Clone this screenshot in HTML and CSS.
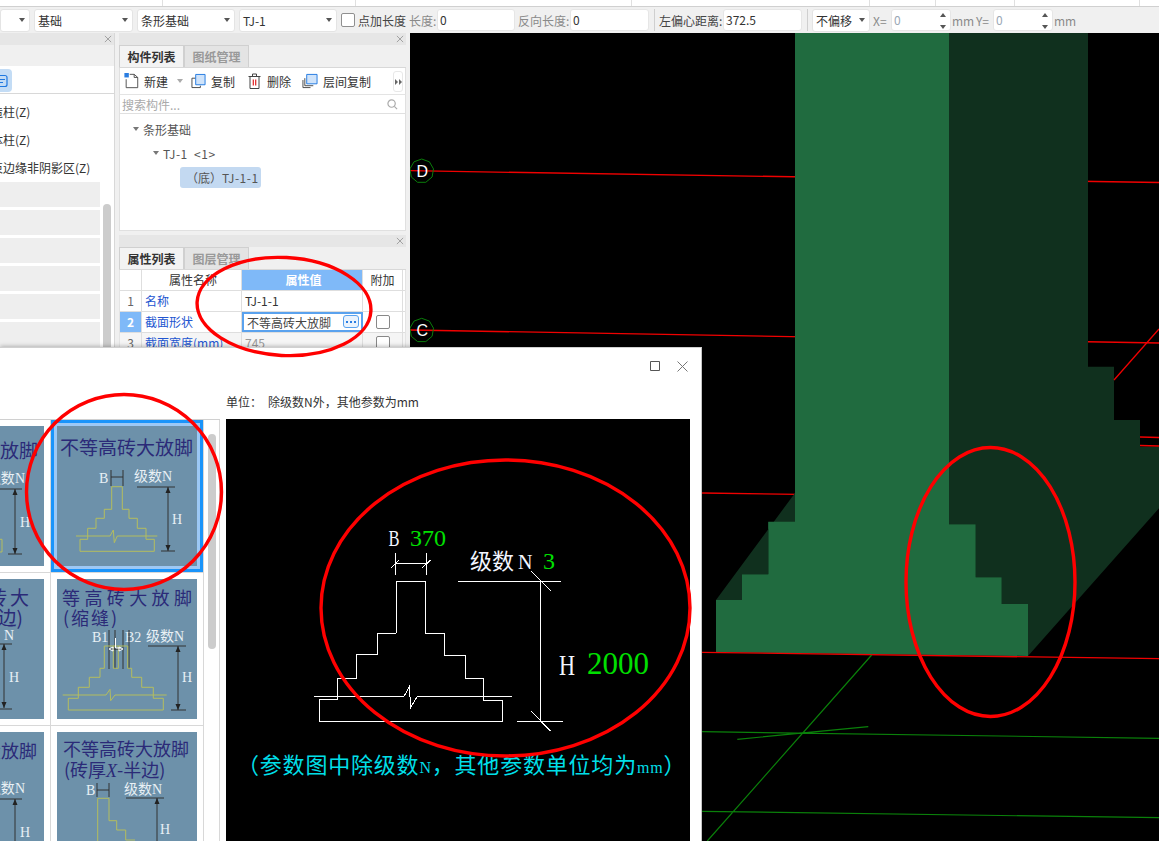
FILE: index.html
```html
<!DOCTYPE html>
<html lang="zh-CN">
<head>
<meta charset="utf-8">
<title>条形基础</title>
<link rel="stylesheet" href="styles.css">
</head>
<body>
<div class="page">
  <div class="strip"><span class="s1"></span><span class="s2"></span><span class="s3"></span><span class="s4"></span><span class="s5"></span><span class="s6"></span><span class="s7"></span></div>
  <div class="toolbar">
    <div class="sel w30"><i class="caret"></i></div>
    <div class="sel w99 ml4"><span>基础</span><i class="caret"></i></div>
    <div class="sel w98 ml4"><span>条形基础</span><i class="caret"></i></div>
    <div class="sel w98 ml4"><span>TJ-1</span><i class="caret"></i></div>
    <div class="check ml4"></div>
    <span class="lbl dark ml3 w48">点加长度</span>
    <span class="lbl ml3 w28">长度:</span>
    <div class="inp w78">0</div>
    <span class="lbl ml3 w52">反向长度:</span>
    <div class="inp w79">0</div>
    <i class="sep"></i>
    <span class="lbl dark w64">左偏心距离:</span>
    <div class="inp w79">372.5</div>
    <i class="sep"></i>
    <div class="sel w58"><span>不偏移</span><i class="caret"></i></div>
    <span class="lbl ml3 w18">X=</span>
    <div class="inp spin w60 grey">0<b class="arrows"><i class="up"></i><i class="down"></i></b></div>
    <span class="lbl ml1 w24">mm</span>
    <span class="lbl w17">Y=</span>
    <div class="inp spin w60 grey">0<b class="arrows"><i class="up"></i><i class="down"></i></b></div>
    <span class="lbl ml1">mm</span>
  </div>

  <div class="work">
    <section class="left">
      <div class="phead"><svg class="px" viewBox="0 0 9 9"><path d="M1 1l7 7M8 1l-7 7"/></svg></div>
      <div class="ltabs"></div>
      <div class="ltool"><div class="lbtn"><svg viewBox="0 0 8 14" class="lbtn-i"><path d="M-2 1.500h7a2 2 0 0 1 2 2v7a2 2 0 0 1-2 2h-7M0 5.500h5M0 8.500h3"/></svg></div></div>
      <div class="llist">
        <div class="litem">构造柱(Z)</div>
        <div class="litem">砌体柱(Z)</div>
        <div class="litem">约束边缘非阴影区(Z)</div>
        <div class="lrows"><i></i><i></i><i></i><i></i><i></i><i></i></div>
        <div class="lbar"></div>
      </div>
    </section>

    <div class="mid">
      <section class="comp">
        <div class="phead"><svg class="px" viewBox="0 0 9 9"><path d="M1 1l7 7M8 1l-7 7"/></svg></div>
        <div class="tabs"><span class="tab on">构件列表</span><span class="tab">图纸管理</span></div>
        <div class="ctool">
          <span class="tool t-new"><svg class="ti" viewBox="0 0 16 18"><path class="k" d="M2 7v9.500h13V5l-4-3.500H6"/><path class="k" d="M11 1.500V5h4"/><path class="b" d="M0 0h5v5H0z"/></svg>新建<i class="caret c2"></i></span>
          <span class="tool t-copy"><svg class="ti" viewBox="0 0 16 16"><path class="k2" d="M1 5h4M1 5v10h9v-2"/><path class="bf" d="M5 1h10v11H5z"/></svg>复制</span>
          <span class="tool t-del"><svg class="ti" viewBox="0 0 14 16"><path class="k" d="M1 3.500h12M5 3.500V1h4v2.500M2.500 3.500v12h9v-12"/><path class="r" d="M5.800 6.500v6M8.200 6.500v6"/></svg>删除</span>
          <span class="tool t-lay"><svg class="ti w17" viewBox="0 0 17 16"><path class="k" d="M1 7v8h8M3 5v8h9"/><path class="bf" d="M5 1h11v10H5z"/></svg>层间复制</span>
          <span class="more"><i></i><i></i></span>
        </div>
        <div class="search"><span>搜索构件...</span><svg class="mag" viewBox="0 0 12 12"><circle cx="5" cy="5" r="4"/><path d="M8 8l3 3"/></svg></div>
        <div class="tree">
          <div class="node n1"><i class="tri"></i>条形基础</div>
          <div class="node n2"><i class="tri"></i><span class="ls">TJ-1 &nbsp;&lt;1&gt;</span></div>
          <div class="node n3"><span class="picked">（底）<span class="ls">TJ-1-1</span></span></div>
        </div>
      </section>

      <section class="props">
        <div class="phead"><svg class="px" viewBox="0 0 9 9"><path d="M1 1l7 7M8 1l-7 7"/></svg></div>
        <div class="tabs"><span class="tab on">属性列表</span><span class="tab">图层管理</span></div>
        <div class="ptable">
          <div class="row head"><span class="c0"></span><span class="c1 ctr">属性名称</span><span class="c2c hl ctr">属性值</span><span class="c3 ctr">附加</span></div>
          <div class="row"><span class="c0 ctr">1</span><span class="c1 blue">名称</span><span class="c2c">TJ-1-1</span><span class="c3"></span></div>
          <div class="row"><span class="c0 ctr hl">2</span><span class="c1 blue">截面形状</span><span class="c2c edit"><span>不等高砖大放脚</span><b class="dots"><i></i><i></i><i></i></b></span><span class="c3 ctr"><i class="cb"></i></span></div>
          <div class="row fade"><span class="c0 ctr">3</span><span class="c1 blue">截面宽度(mm)</span><span class="c2c muted">745</span><span class="c3 ctr"><i class="cb"></i></span></div>
        </div>
      </section>
    </div>

    <div class="view">
      <svg class="scene" viewBox="410 33 749 808">
        <path class="red" d="M410 170.700L1159 182.500M410 330L1159 343M702 493L1159 499.300"/>
        <path class="darkg" d="M795 493L716 600H742V574H768V522H795Z"/>
        <path class="side" d="M949 33H1088V366.700H1114V420H1140V446.700H1159V508.300L1028 656V604H1001.700V577.300H975.700V524.300H949Z"/>
        <path class="front" d="M795 33H949V524.300H975.700V577.300H1001.700V604H1028V656L716 652.300V600H742V574.300H768.300V521.700H795Z"/>
        <path class="red" d="M702 652.300L1159 658.700M1114 380L1159 329M1140 437L1159 437.500M1140 445.500L1159 446"/>
        <path class="green" d="M871.700 655L707.300 841M702 731.700L1159 738.300M737.300 739.300L868.300 726.700M702 811.300L1159 817.700"/>
        <polygon class="axis" points="421.700,159 429.400,161.800 433.500,168.900 432.100,177 425.800,182.300 417.600,182.300 411.300,177 409.900,168.900 414,161.800"/>
        <polygon class="axis" points="421.700,318.300 429.400,321.100 433.500,328.200 432.100,336.300 425.800,341.600 417.600,341.600 411.300,336.300 409.900,328.200 414,321.100"/>
        <text class="axt" x="416.500" y="177">D</text>
        <text class="axt" x="416.500" y="336">C</text>
      </svg>
    </div>
  </div>

  <div class="dialog">
    <div class="dhead">
      <svg class="dmax" viewBox="0 0 10 10"><path d="M.5.500h9v9h-9z"/></svg>
      <svg class="dclose" viewBox="0 0 11 11"><path d="M.5.500l10 10M10.500.500l-10 10"/></svg>
    </div>
    <div class="dunit"><span class="u1">单位：</span><span>除级数N外，其他参数为mm</span></div>
    <div class="dbody">
      <div class="dlist">
        <div class="cells">
          <div class="cell cl">
            <svg class="thumb" viewBox="0 0 140 140">
              <text class="tt f19" x="134" y="32" text-anchor="end">等高砖大放脚</text>
              <text class="tl f14" x="121" y="57" text-anchor="end">级数<tspan class="lat">N</tspan></text>
              <path class="dim" d="M80 63H118M111 63V128M104 128H118"/>
              <path class="ah" d="M111 63l-2.500 6h5zM111 128l-2.500-6h5z"/>
              <text class="tl lat f14" x="116" y="101">H</text>
              <path class="yl" d="M96 113.300h2V126h-2"/>
            </svg>
          </div>
          <div class="cell chosen">
            <svg class="thumb" viewBox="0 0 140 140">
              <text class="tt f19" x="3" y="29">不等高砖大放脚</text>
              <text class="tl lat f14" x="42" y="57">B</text>
              <text class="tl f14" x="77" y="55">级数<tspan class="lat">N</tspan></text>
              <path class="dim" d="M54 44V60M66 44V60M54 51H66M80 61H118M111 61V125M104 125H118"/>
              <path class="ah" d="M111 61l-2.500 6h5zM111 125l-2.500-6h5z"/>
              <text class="tl lat f14" x="115" y="98">H</text>
              <path class="yl" d="M54.700 60.700V83.300H47.300V92.300H39V102.300H30.700V113.300H23V125.300H97.300V113.300H89V102.300H80.300V92.300H72V83.300H65.300V60.700Z"/>
              <path class="yl" d="M19 110H53L56.300 104L57.300 116.700L60.300 110H100.300"/>
            </svg>
          </div>
          <div class="cell cl">
            <svg class="thumb" viewBox="0 0 140 140">
              <text class="tt f19 sp3" x="128" y="26" text-anchor="end">砖大</text>
              <text class="tt f19" x="119" y="46" text-anchor="end">边)</text>
              <text class="tl lat f14" x="110" y="61" text-anchor="end">N</text>
              <path class="dim" d="M92 65H108M100 65V129M93 130H108"/>
              <path class="ah" d="M100 65l-2.500 6h5zM100 129l-2.500-6h5z"/>
              <text class="tl lat f14" x="105" y="103">H</text>
            </svg>
          </div>
          <div class="cell">
            <svg class="thumb" viewBox="0 0 140 140">
              <text class="tt f18 sp5" x="5" y="26">等高砖大放脚</text>
              <text class="tt f18 sp2" x="6" y="46">(缩缝)</text>
              <text class="tl lat f14" x="35" y="63">B1</text>
              <text class="tl lat f14" x="68" y="63">B2</text>
              <text class="tl f14" x="89" y="62">级数<tspan class="lat">N</tspan></text>
              <path class="dim" d="M52 51V90M58 51V90M66 51V90M72 51V90M91 67H129M121 67V131M114 131H129"/>
              <path class="ah" d="M121 67l-2.500 6h5zM121 131l-2.500-6h5z"/>
              <text class="tl lat f14" x="125" y="103">H</text>
              <path class="yl" d="M47.300 67V89.300H43V98.300H32.300V108.300H21.300V119.300H11.300V131H106.300V119.300H96.300V108.300H84.700V98.300H74.700V89.300H70.700V67ZM56.300 67V89.300H61.300V67"/>
              <path class="yl" d="M5.700 116H49L53 110.300L53.700 121.700L58 116H109.700"/>
              <path class="dim2" d="M52 70H66"/>
              <path class="wt" d="M58.500 59V69H64M52 70l4-2v4zM66 70l-4-2v4z"/>
            </svg>
          </div>
          <div class="cell cl">
            <svg class="thumb" viewBox="0 0 140 140">
              <text class="tt f18" x="133" y="26" text-anchor="end">大放脚</text>
              <text class="tl f14" x="121" y="61" text-anchor="end">级数<tspan class="lat">N</tspan></text>
              <path class="dim" d="M80 67H118M111 67V140"/>
              <path class="ah" d="M111 67l-2.500 6h5z"/>
              <text class="tl lat f14" x="116" y="105">H</text>
            </svg>
          </div>
          <div class="cell">
            <svg class="thumb" viewBox="0 0 140 140">
              <text class="tt f18" x="6" y="24">不等高砖大放脚</text>
              <text class="tt f18" x="7" y="45">(砖厚<tspan class="lat it">X</tspan>-半边)</text>
              <text class="tl lat f14" x="29" y="63">B</text>
              <text class="tl f14" x="67" y="62">级数<tspan class="lat">N</tspan></text>
              <path class="dim" d="M40 51V65M52 51V65M40 58H52M69 66H107M100 66V140"/>
              <path class="ah" d="M100 66l-2.500 6h5z"/>
              <text class="tl lat f14" x="103" y="102">H</text>
              <path class="yl" d="M40.700 140V66.300H52V88.700H59.700V98H68.700V108H78"/>
            </svg>
          </div>
        </div>
        <div class="track"><i></i></div>
      </div>
      <div class="preview">
        <svg class="pv" viewBox="226 419 464 422">
          <path class="wl" d="M396.300 633.300V581.300H425.700V633.300H444.700V655.300H465.700V678.700H483.700V700.300H502.700V721.700M501.500 721.300H319.300V699.300H337.700V678.700H356.700V654.300H377.700V633.300H396.300"/>
          <path class="wl" d="M314 696.300H404L409.300 686.700L410.700 707.300L417.300 696.300H511.700"/>
          <path class="wl" d="M395.300 553V575M426.700 553V575M395.300 563.300H426.700M391.300 567.700L399.300 560M422.300 567.700L430.700 560"/>
          <path class="wl" d="M458 581.300H560.700M540.300 581.300V721.300M530.700 570.700L550.700 590.700M517 721.300H562.700M530.700 710.700L550.700 731.300"/>
          <text class="pw lat f23" transform="translate(388.500 546) scale(.72 1)">B</text>
          <text class="pg lat f24" x="410" y="546">370</text>
          <text class="pw f22" x="470" y="569">级数</text>
          <text class="pw lat f20" x="518" y="569">N</text>
          <text class="pg lat f24" x="543" y="569">3</text>
          <text class="pw lat f30" transform="translate(559 675) scale(.74 1)">H</text>
          <text class="pg lat f31" x="587" y="674">2000</text>
          <text class="pc" x="237" y="773">（参数图中除级数<tspan class="lat f16">N</tspan>，其他参数单位均为<tspan class="lat f16">mm</tspan>）</text>
        </svg>
      </div>
    </div>
  </div>

  <svg class="marks" viewBox="0 0 1159 841">
    <ellipse cx="284" cy="306.500" rx="87" ry="49" transform="rotate(3 284 306.500)"/>
    <ellipse cx="124" cy="492" rx="97.500" ry="97.500"/>
    <ellipse cx="505.500" cy="608" rx="184.500" ry="148"/>
    <ellipse cx="990.500" cy="582" rx="84.500" ry="134.500"/>
  </svg>
</div>
</body>
</html>
```

FILE: styles.css
```css
* { box-sizing: border-box; }
html, body { margin: 0; padding: 0; }
body { font-family: "Noto Sans CJK SC", "Noto Sans", sans-serif; font-size: 12px; color: #333; }
.page { position: relative; width: 1159px; height: 841px; overflow: hidden; background: #f0f0f0; display: flex; flex-direction: column; }

/* top strip */
.strip { height: 7px; background: #fff; border-bottom: 1px solid #d0d0d0; display: flex; flex: none; }
.strip span { border-right: 1px solid #e0e0e0; height: 6px; flex: none; }
.s1 { width: 163px; } .s2 { width: 193px; } .s3 { width: 276px; } .s4 { width: 238px; }
.s5 { width: 66px; } .s6 { width: 79px; } .s7 { width: 125px; }

/* toolbar */
.toolbar { height: 26px; flex: none; display: flex; align-items: center; background: #f0f0f0; white-space: nowrap; }
.sel { height: 23px; background: #fff; border: 1px solid #e4e4e4; border-radius: 3px; display: flex; align-items: center; justify-content: space-between; padding: 0 4px 0 3px; color: #333; flex: none; }
.sel.w30 { justify-content: flex-end; }
.caret { width: 0; height: 0; border: 3px solid transparent; border-top: 4px solid #555; border-bottom: 0; flex: none; display: block; }
.w30 { width: 30px; } .w99 { width: 99px; } .w98 { width: 98px; } .w58 { width: 58px; }
.w48 { width: 48px; } .w28 { width: 28px; } .w52 { width: 52px; } .w78 { width: 78px; } .w79 { width: 79px; }
.w64 { width: 64px; } .w18 { width: 18px; } .w60 { width: 60px; } .w24 { width: 24px; } .w17 { width: 17px; }
.ml1 { margin-left: 1px; } .ml3 { margin-left: 3px; } .ml4 { margin-left: 4px; }
.check { width: 14px; height: 14px; background: #fff; border: 1px solid #8f8f8f; border-radius: 2px; flex: none; }
.lbl { color: #8a8a8a; flex: none; }
.lbl.dark { color: #444; }
.inp { height: 22px; background: #fff; border: 1px solid #e6e6e6; border-radius: 3px; line-height: 20px; padding-left: 2px; color: #333; flex: none; }
.inp.grey { color: #9aa7b5; }
.spin { position: relative; }
.arrows { position: absolute; right: 3px; top: 3px; width: 7px; height: 16px; display: flex; flex-direction: column; justify-content: space-between; }
.up, .down { display: block; width: 0; height: 0; border: 3px solid transparent; }
.up { border-top: 0; border-bottom: 4px solid #555; }
.down { border-bottom: 0; border-top: 4px solid #555; }
.sep { width: 1px; height: 22px; background: #cfcfcf; margin: 0 4px 0 5px; flex: none; }

/* workspace */
.work { flex: 1; display: flex; min-height: 0; }
.phead { height: 12px; background: #e6e6e6; position: relative; flex: none; }
.px { position: absolute; right: 2px; top: 2px; width: 8px; height: 8px; fill: none; stroke: #999; stroke-width: 1; }

.left { width: 115px; flex: none; border-right: 1px solid #d8d8d8; display: flex; flex-direction: column; }
.ltabs { height: 21px; background: #f0f0f0; flex: none; }
.ltool { height: 28px; background: #fff; border-bottom: 1px solid #d8d8d8; flex: none; }
.lbtn { width: 12px; height: 23px; margin-top: 3px; background: #c3dcf5; border-radius: 0 4px 4px 0; display: flex; align-items: center; }
.lbtn-i { width: 8px; height: 14px; fill: none; stroke: #1f78e0; stroke-width: 1.200; overflow: hidden; flex: none; }
.llist { flex: 1; background: #fff; position: relative; overflow: hidden; }
.litem { height: 28px; line-height: 35px; margin-left: -21px; white-space: nowrap; color: #333; }
.lrows { padding-top: 4px; display: flex; flex-direction: column; gap: 3px; width: 100px; }
.lrows i { display: block; height: 25px; background: #eee; flex: none; }
.lbar { position: absolute; left: 103px; top: 110px; width: 8px; height: 300px; background: #ccc; border-radius: 4px; }

.mid { width: 295px; padding: 0 4px; flex: none; display: flex; flex-direction: column; gap: 4px; }
.comp { height: 198px; flex: none; display: flex; flex-direction: column; }
.props { flex: 1; display: flex; flex-direction: column; min-height: 0; }
.tabs { height: 23px; display: flex; flex: none; border-bottom: 1px solid #d8d8d8; background: #f0f0f0; }
.tab { width: 65px; height: 22px; line-height: 21px; text-align: center; font-weight: 700; color: #999; background: #e4e4e4; border: 1px solid #d0d0d0; border-bottom: 0; flex: none; }
.tab.on { color: #333; background: #f3f3f3; }

.ctool { height: 27px; background: #fff; display: flex; align-items: center; position: relative; flex: none; border-left: 1px solid #e0e0e0; border-right: 1px solid #e0e0e0; border-bottom: 1px solid #e4e4e4; }
.tool { display: flex; align-items: center; gap: 5px; flex: none; color: #333; }
.t-new { margin-left: 4px; width: 67px; }
.t-copy { width: 56px; }
.t-del { width: 55px; }
.ti { width: 15px; height: 16px; flex: none; fill: none; }
.ti.w17 { width: 16px; }
.k, .k2 { stroke: #444; stroke-width: 1; fill: none; }
.b { fill: #2a7de1; }
.bf { fill: #cfe3fa; stroke: #1f78e0; stroke-width: 1; }
.r { stroke: #e02020; stroke-width: 1.200; }
.c2 { margin-left: 4px; border-top-color: #aaa; }
.more { position: absolute; right: 2px; top: 3px; width: 10px; height: 21px; border: 1px solid #e8e8e8; border-radius: 3px; display: flex; align-items: center; justify-content: center; }
.more i { width: 0; height: 0; border: 3px solid transparent; border-left: 3px solid #666; border-right: 0; display: block; margin: 0 .5px; }
.search { height: 19px; background: #fff; border-left: 1px solid #e0e0e0; border-right: 1px solid #e0e0e0; border-bottom: 1px solid #e0e0e0; padding: 0 7px 0 2px; display: flex; align-items: center; justify-content: space-between; color: #aaa; flex: none; }
.mag { width: 11px; height: 11px; fill: none; stroke: #aaa; stroke-width: 1.300; }
.tree { flex: 1; background: #fff; border: 1px solid #e0e0e0; border-top: 0; }
.node { display: flex; align-items: center; white-space: nowrap; color: #555; }
.ls { letter-spacing: .5px; }
.n1 { height: 24px; padding-left: 13px; margin-top: 3px; }
.n2 { height: 24px; padding-left: 33px; }
.n3 { height: 24px; padding-left: 60px; }
.tri { width: 0; height: 0; border: 3px solid transparent; border-top: 4px solid #777; border-bottom: 0; margin-right: 4px; display: block; }
.picked { background: #c3d9f1; border-radius: 3px; height: 21px; line-height: 21px; padding: 0 2px 0 6px; }

.ptable { flex: 1; background: #fff; overflow: hidden; border-left: 1px solid #e4e4e4; border-right: 1px solid #e4e4e4; }
.row { height: 21px; display: flex; border-bottom: 1px solid #dedede; }
.row > span { border-right: 1px solid #dedede; line-height: 20px; flex: none; display: block; }
.c0 { width: 22px; color: #666; }
.c1 { width: 100px; padding-left: 3px; white-space: nowrap; overflow: hidden; }
.c2c { width: 121px; padding-left: 3px; position: relative; }
.c3 { width: 40px; }
.ctr { text-align: center; }
.hl { background: #7fb9f8; color: #fff; font-weight: 700; }
.blue { color: #2255d0; }
.muted { color: #999; }
.row > .edit { border: 2px solid #5aa2ee; line-height: 17px; padding-left: 3px; color: #444; white-space: nowrap; }
.dots { position: absolute; right: 2px; top: 1px; width: 16px; height: 13px; border: 1px solid #5aa2ee; border-radius: 3px; background: #eaf3fd; display: flex; align-items: center; justify-content: center; gap: 2px; }
.dots i { display: block; width: 2px; height: 2px; background: #2a7de1; flex: none; }
.cb { display: block; width: 14px; height: 14px; margin: 3px auto 0; border: 1px solid #888; border-radius: 2px; background: #fff; }
.fade { background: #f5f5f5; }

.view { flex: 1; background: #000; min-width: 0; }
.scene { display: block; width: 749px; height: 808px; fill: none; }
.red { stroke: #f00000; stroke-width: 1.300; fill: none; }
.darkg, .side { fill: #10301e; }
.front { fill: #206b3f; }
.green { stroke: #0a800a; stroke-width: 1.200; fill: none; }
.axis { fill: none; stroke: #0a7d0a; stroke-width: 1; }
.axt { fill: #fff; font-family: "Liberation Sans", sans-serif; font-size: 16px; }

/* dialog */
.dialog { position: absolute; left: 0; top: 347px; width: 702px; height: 494px; background: #fff; border-top: 1px solid #d0d0d0; border-right: 1px solid #c4c4c4; box-shadow: 0 -1px 4px rgba(0,0,0,.25); display: flex; flex-direction: column; }
.dhead { height: 36px; display: flex; justify-content: flex-end; align-items: center; gap: 17px; padding: 0 13px 0 0; flex: none; }
.dmax { width: 10px; height: 10px; fill: none; stroke: #555; stroke-width: 1; }
.dclose { width: 11px; height: 11px; fill: none; stroke: #777; stroke-width: 1; }
.dunit { height: 35px; padding-left: 226px; display: flex; align-items: center; color: #333; flex: none; }
.u1 { margin-right: 6px; }
.dbody { flex: 1; display: flex; gap: 6px; min-height: 0; }
.dlist { width: 220px; flex: none; display: flex; border-top: 1px solid #d0d0d0; overflow: hidden; align-items: stretch; }
.cells { width: 204px; flex: none; display: grid; grid-template-columns: 51px 153px; grid-auto-rows: 153px; }
.cell { padding: 6px; border-right: 1px solid #d8d8d8; border-bottom: 1px solid #d8d8d8; overflow: hidden; }
.cell.cl { display: flex; justify-content: flex-end; }
.cell.chosen { box-shadow: inset 0 0 0 3px #1a94fa, inset 0 0 0 6px #9cc8f5; }
.thumb { display: block; width: 140px; height: 140px; flex: none; background: #6d91aa; }
.tt { fill: #2b2a78; }
.tl { fill: #e8f0f5; }
.lat { font-family: "Liberation Serif", serif; }
.it { font-style: italic; }
.f14 { font-size: 14px; } .f16 { font-size: 16px; } .f18 { font-size: 18px; } .f19 { font-size: 19px; }
.f20 { font-size: 20px; } .f22 { font-size: 22px; } .f23 { font-size: 23px; } .f24 { font-size: 24px; }
.f30 { font-size: 30px; } .f31 { font-size: 31px; }
.sp2 { letter-spacing: 2px; } .sp3 { letter-spacing: 3px; } .sp5 { letter-spacing: 4.400px; }
.dim { stroke: #333; stroke-width: 1; fill: none; }
.dim2 { stroke: #222; stroke-width: 1; fill: none; }
.wt { stroke: #fff; stroke-width: 1; fill: none; }
.ah { fill: #222; }
.yl { stroke: #b4bd5e; stroke-width: 1; fill: none; }
.track { width: 16px; flex: none; border-right: 1px solid #d8d8d8; padding: 14px 0 0 4px; }
.track i { display: block; width: 8px; height: 215px; background: #ccc; border-radius: 4px; }
.preview { width: 464px; flex: none; background: #000; }
.pv { display: block; width: 464px; height: 422px; fill: none; }
.wl { stroke: #fff; stroke-width: 1; fill: none; shape-rendering: crispEdges; }
.pw { fill: #f2f6ff; }
.pg { fill: #00e000; }
.pc { fill: #00dfe8; font-size: 22px; letter-spacing: .8px; }

/* hand-drawn red marks */
.marks { position: absolute; left: 0; top: 0; width: 1159px; height: 841px; fill: none; pointer-events: none; }
.marks ellipse { stroke: #f00; stroke-width: 3.400; fill: none; }
```
